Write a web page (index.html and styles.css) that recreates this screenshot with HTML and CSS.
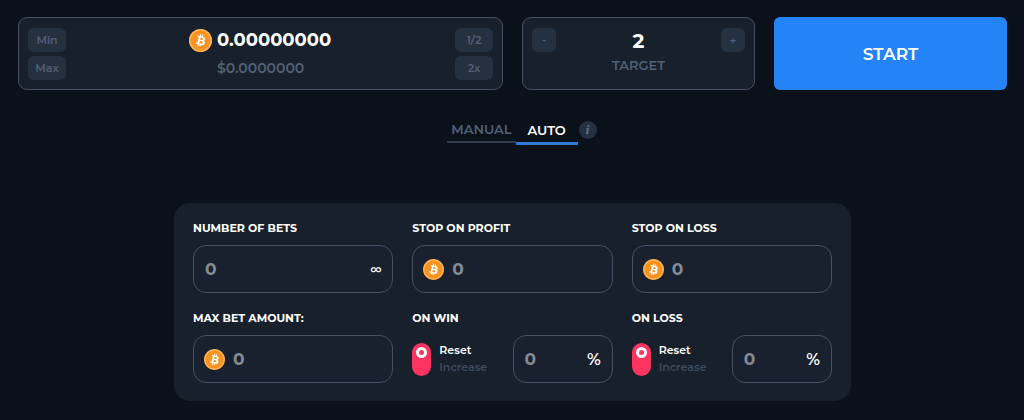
FILE: index.html
```html
<!DOCTYPE html>
<html lang="en">
<head>
    <meta charset="UTF-8">
    <meta name="viewport" content="width=device-width, initial-scale=1.0">
    <title>Auto Bet</title>
    <link rel="stylesheet" href="styles.css">
</head>
<body>
    <svg class="sprite" aria-hidden="true">
        <symbol id="btc" viewBox="0 0 32 32">
            <circle cx="16" cy="16" r="16" fill="#f7931e"/>
            <circle cx="16" cy="16" r="14.8" fill="none" stroke="#fbb868" stroke-width="2"/>
            <path fill="#fff" transform="translate(2 2) scale(.88)" d="M23.189 14.02c.314-2.096-1.283-3.223-3.465-3.975l.708-2.84-1.728-.43-.69 2.765c-.454-.114-.92-.22-1.385-.326l.695-2.783L15.596 6l-.708 2.839c-.376-.086-.746-.17-1.104-.26l.002-.009-2.384-.595-.46 1.846s1.283.294 1.256.312c.7.175.826.638.805 1.006l-.806 3.235c.048.012.11.03.18.057l-.183-.045-1.13 4.532c-.086.212-.303.531-.793.41.018.025-1.256-.313-1.256-.313l-.858 1.978 2.25.561c.418.105.828.215 1.231.318l-.715 2.872 1.727.43.708-2.84c.472.127.93.245 1.378.357l-.706 2.828 1.728.43.715-2.866c2.948.558 5.164.333 6.097-2.333.752-2.146-.037-3.385-1.588-4.192 1.13-.26 1.98-1.003 2.207-2.538zm-3.95 5.538c-.533 2.147-4.148.986-5.32.695l.95-3.805c1.172.293 4.929.872 4.37 3.11zm.535-5.569c-.487 1.953-3.495.96-4.47.717l.86-3.45c.975.243 4.118.696 3.61 2.733z"/>
        </symbol>
    </svg>

    <div class="top-bar">
        <div class="box bet-box">
            <div class="btn-col">
                <button class="small-btn">Min</button>
                <button class="small-btn">Max</button>
            </div>
            <div class="amount">
                <svg class="coin"><use href="#btc"/></svg>
                <input type="text" class="amount-input" value="0.00000000" aria-label="Bet amount">
                <span class="amount-usd">$0.0000000</span>
            </div>
            <div class="btn-col">
                <button class="small-btn">1/2</button>
                <button class="small-btn">2x</button>
            </div>
        </div>

        <div class="box target-box">
            <button class="small-btn square">-</button>
            <div class="target">
                <input type="text" id="target" class="target-input" value="2">
                <label for="target">TARGET</label>
            </div>
            <button class="small-btn square">+</button>
        </div>

        <button class="start-btn">START</button>
    </div>

    <div class="tabs">
        <button class="tab">MANUAL</button>
        <button class="tab active">AUTO</button>
        <button class="info">i</button>
    </div>

    <div class="panel">
        <div class="group">
            <label class="title" for="bets">NUMBER OF BETS</label>
            <div class="field">
                <input type="text" id="bets" placeholder="0">
                <span class="infinity">∞</span>
            </div>
        </div>

        <div class="group">
            <label class="title" for="profit">STOP ON PROFIT</label>
            <div class="field has-coin">
                <svg class="coin"><use href="#btc"/></svg>
                <input type="text" id="profit" placeholder="0">
            </div>
        </div>

        <div class="group">
            <label class="title" for="loss">STOP ON LOSS</label>
            <div class="field has-coin">
                <svg class="coin"><use href="#btc"/></svg>
                <input type="text" id="loss" placeholder="0">
            </div>
        </div>

        <div class="group">
            <label class="title" for="max-bet">MAX BET AMOUNT:</label>
            <div class="field has-coin">
                <svg class="coin"><use href="#btc"/></svg>
                <input type="text" id="max-bet" placeholder="0">
            </div>
        </div>

        <div class="group">
            <label class="title" for="on-win">ON WIN</label>
            <div class="action">
                <label class="switch">
                    <input type="checkbox">
                    <span class="modes">
                        <span class="on">Reset</span>
                        <span>Increase</span>
                    </span>
                </label>
                <div class="field">
                    <input type="text" id="on-win" placeholder="0">
                    <span class="percent">%</span>
                </div>
            </div>
        </div>

        <div class="group">
            <label class="title" for="on-loss">ON LOSS</label>
            <div class="action">
                <label class="switch">
                    <input type="checkbox">
                    <span class="modes">
                        <span class="on">Reset</span>
                        <span>Increase</span>
                    </span>
                </label>
                <div class="field">
                    <input type="text" id="on-loss" placeholder="0">
                    <span class="percent">%</span>
                </div>
            </div>
        </div>
    </div>
</body>
</html>
```
FILE: styles.css
```css
*, *::before {
    box-sizing: border-box;
}

body {
    margin: 0;
    padding: 17px 17px 17px 18px;
    background-color: #0b111b;
    color: #fff;
    font-family: Montserrat, Inter, sans-serif;
    font-size: 13px;
}

button, input {
    margin: 0;
    padding: 0;
    border: none;
    background: none;
    color: inherit;
    font-family: inherit;
}

button {
    cursor: pointer;
}

input:focus {
    outline: none;
}

.sprite {
    display: none;
}

.coin {
    width: 23px;
    height: 23px;
    flex-shrink: 0;
}

/* top bar */

.top-bar {
    display: grid;
    grid-template-columns: repeat(4, minmax(0, 1fr));
    gap: 19px;
}

.box {
    display: flex;
    justify-content: space-between;
    align-items: flex-start;
    padding: 10px 9px 9px;
    background-color: #17202b;
    border: 1px solid #465061;
    border-radius: 9px;
}

.bet-box {
    grid-column: span 2;
}

.btn-col {
    display: flex;
    flex-direction: column;
    gap: 4px;
}

.small-btn {
    width: 38px;
    height: 24px;
    background-color: #263140;
    border-radius: 6px;
    color: #526074;
    font-size: 11px;
    font-weight: 600;
}

.square {
    width: 24px;
}

.amount {
    display: grid;
    grid-template-columns: 23px 115px;
    column-gap: 5px;
    row-gap: 4px;
    align-items: center;
}

.amount-input {
    width: 100%;
    height: 24px;
    font-size: 18px;
    font-weight: 700;
}

.amount-usd {
    grid-column: 2;
    line-height: 24px;
    color: #526074;
    font-size: 14px;
    font-weight: 600;
}

.target {
    display: flex;
    flex-direction: column;
    align-items: center;
    color: #526074;
    font-weight: 600;
}

.target-input {
    width: 100px;
    height: 26px;
    color: #fff;
    font-size: 20px;
    font-weight: 700;
    text-align: center;
}

.target label {
    line-height: 22px;
}

.start-btn {
    background-color: #2383f7;
    border-radius: 6px;
    font-size: 17px;
    font-weight: 600;
}

/* tabs */

.tabs {
    position: relative;
    display: flex;
    align-items: flex-start;
    width: fit-content;
    margin: 27px auto 58px;
}

.tab {
    min-width: 62px;
    height: 26px;
    padding: 0 4px;
    border-bottom: 2px solid #333d4b;
    color: #526074;
    font-size: 13px;
    font-weight: 600;
}

.tab.active {
    height: 28px;
    border-bottom: 3px solid #3079d6;
    color: #fff;
}

.info {
    position: absolute;
    top: 4px;
    left: 100%;
    width: 18px;
    height: 18px;
    margin-left: 1px;
    background-color: #263140;
    border-radius: 50%;
    color: #66738a;
    font-family: "Liberation Serif", serif;
    font-size: 13px;
    font-style: italic;
    font-weight: 700;
    line-height: 18px;
}

/* auto bet panel */

.panel {
    display: grid;
    grid-template-columns: repeat(3, minmax(0, 1fr));
    gap: 17px 19px;
    max-width: 677px;
    margin: 0 auto;
    padding: 17px 19px 18px;
    background-color: #17202b;
    border-radius: 16px;
}

.title {
    display: block;
    margin-bottom: 9px;
    font-size: 11px;
    font-weight: 700;
    line-height: 16px;
}

.field {
    display: flex;
    align-items: center;
    gap: 8px;
    height: 48px;
    padding: 0 11px;
    background-color: #19212e;
    border: 1px solid #465061;
    border-radius: 13px;
}

.field .coin {
    width: 21px;
    height: 21px;
}

.has-coin {
    padding: 0 10px;
}

.field input {
    flex: 1;
    min-width: 0;
    font-size: 17px;
    font-weight: 700;
}

.field input::placeholder {
    color: #858b95;
    opacity: 1;
}

.infinity {
    font-size: 12px;
    font-weight: 600;
}

.percent {
    font-size: 16px;
    font-weight: 600;
}

.action {
    display: flex;
    justify-content: space-between;
    align-items: center;
}

.action .field {
    width: 50%;
}

.switch {
    display: flex;
    align-items: center;
    gap: 8px;
    cursor: pointer;
}

.switch input {
    appearance: none;
    width: 19px;
    height: 33px;
    padding: 4px;
    background-color: #fb3460;
    border-radius: 10px;
}

.switch input::before {
    content: "";
    display: block;
    width: 11px;
    height: 11px;
    border: 3px solid #fff;
    border-radius: 50%;
}

.switch input:checked::before {
    margin-top: 14px;
}

.modes {
    display: flex;
    flex-direction: column;
    color: #3f4a5b;
    font-size: 11px;
    font-weight: 600;
    line-height: 17px;
}

.on {
    color: #fff;
}
```
